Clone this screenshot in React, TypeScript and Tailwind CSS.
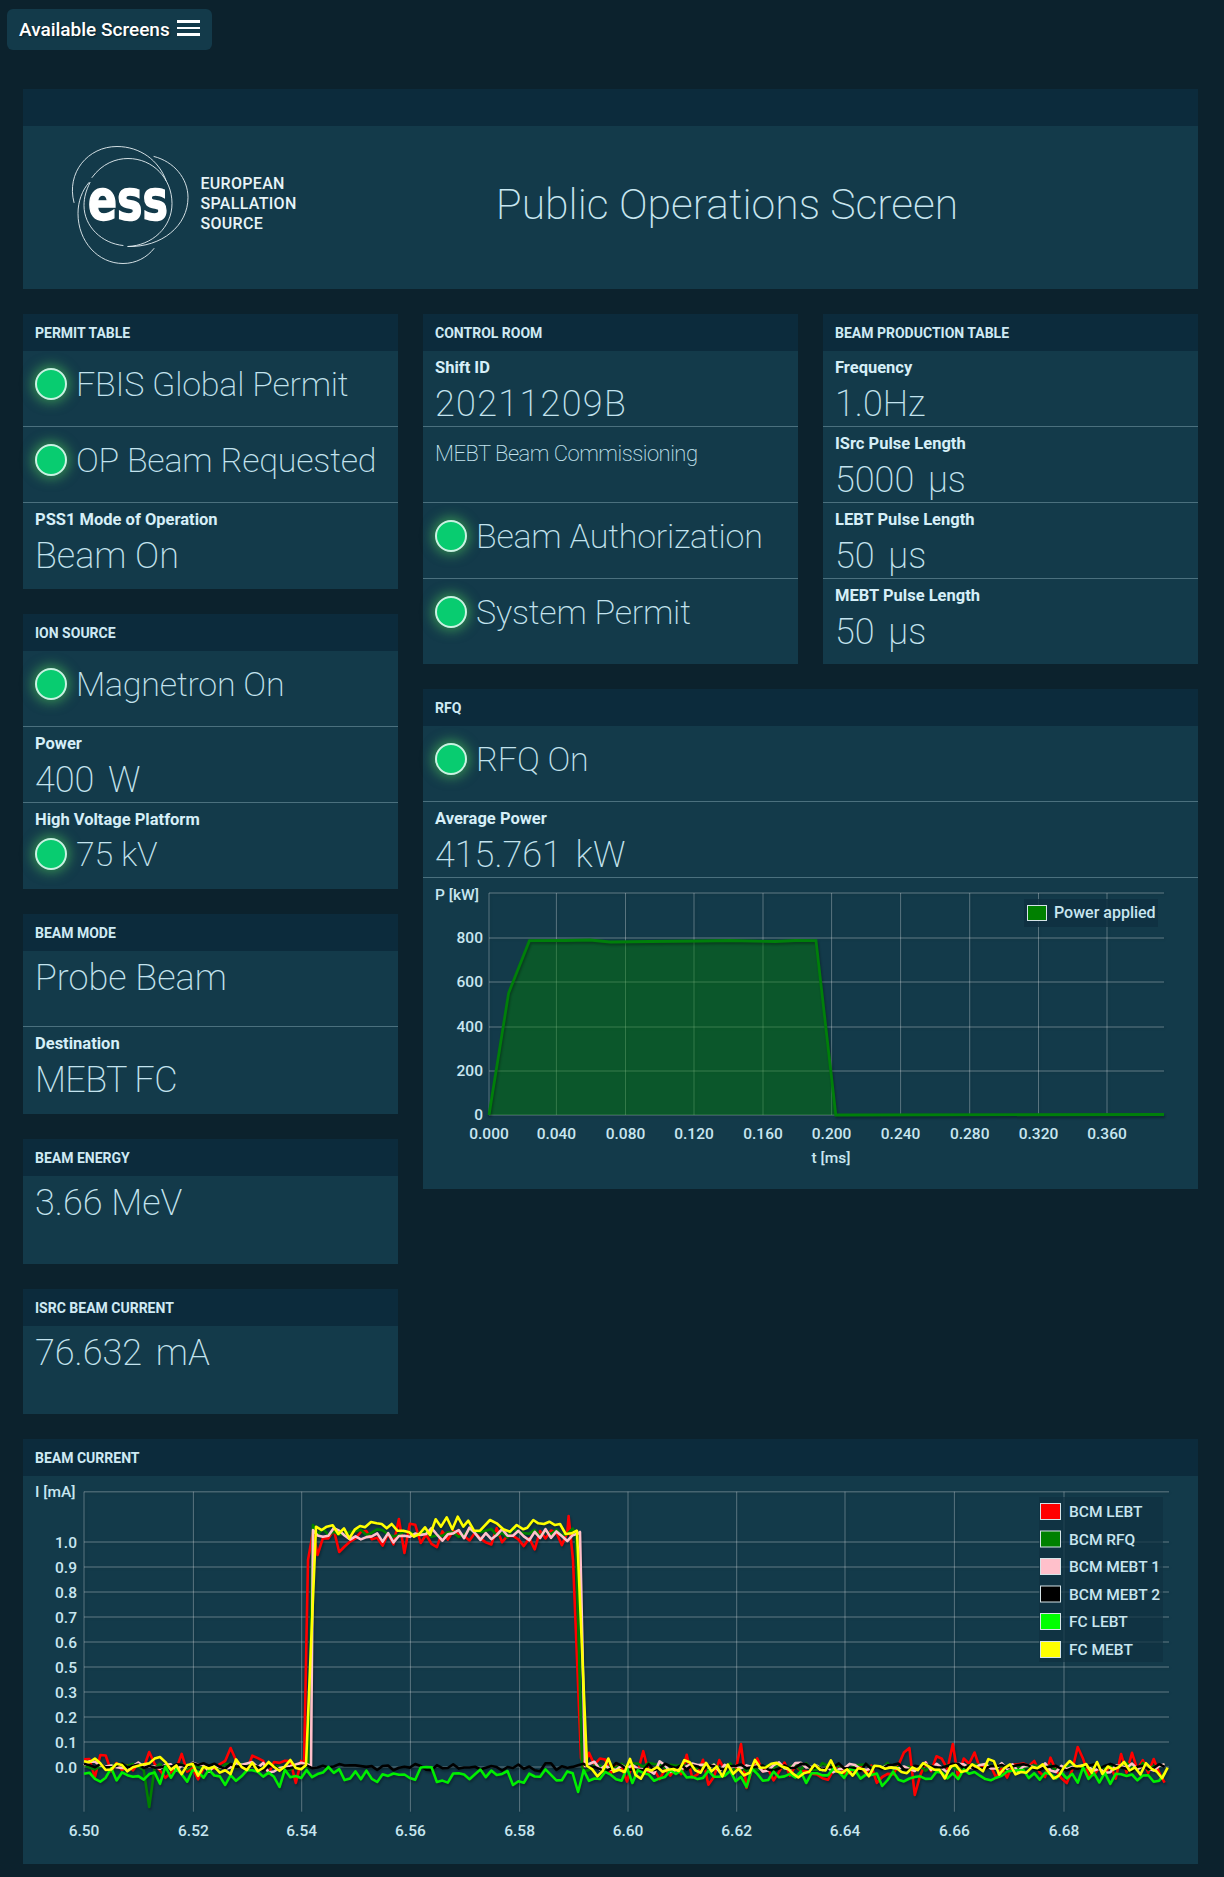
import React from "react";

const bgLine = "#ffffff";

function Led() {
  return (
    <span className="block w-[32px] h-[32px] shrink-0 rounded-full bg-[#08cc70] border-2 border-[#c9f2e2] shadow-[0_0_12px_3px_rgba(76,200,90,0.55)]" />
  );
}

function Panel({ title, children, className = "" }: { title: string; children: React.ReactNode; className?: string }) {
  return (
    <section className={"bg-[#133a4a] flex flex-col " + className}>
      <h2 className="h-[37px] shrink-0 bg-[#0c2b3c] px-3 pt-[1px] flex items-center text-[14px] font-bold text-[#cfeaf4] uppercase">
        {title}
      </h2>
      {children}
    </section>
  );
}

function LedRow({ text, last = false }: { text: string; last?: boolean }) {
  return (
    <div className={"h-[76px] shrink-0 px-3 pt-[17px] flex items-start gap-[9px] " + (last ? "" : "border-b border-[#4b707e]")}>
      <Led />
      <span className="font-[200] text-[34px] tracking-[-0.22px] leading-[32px] text-[#c3e3ee] whitespace-nowrap">{text}</span>
    </div>
  );
}

function ValueRow({ label, value, last = false, h = "h-[76px]", cls = "" }: { label: string; value: string; last?: boolean; h?: string; cls?: string }) {
  return (
    <div className={h + " shrink-0 px-3 pt-[7px] " + (last ? "" : "border-b border-[#4b707e]")}>
      <div className="text-[16.5px] leading-[20px] font-bold text-[#d6eff8]">{label}</div>
      <div className={"mt-[4px] font-[200] text-[36px] leading-[44px] text-[#c3e3ee] whitespace-nowrap " + cls}>{value}</div>
    </div>
  );
}

function BigRow({ value, h = "h-[76px]", last = false, cls = "" }: { value: string; h?: string; last?: boolean; cls?: string }) {
  return (
    <div className={h + " shrink-0 px-3 pt-[5px] " + (last ? "" : "border-b border-[#4b707e]")}>
      <div className={"font-[200] text-[36px] leading-[44px] text-[#c3e3ee] whitespace-nowrap " + cls}>{value}</div>
    </div>
  );
}

function Logo() {
  return (
    <svg viewBox="60 137.5 250 140" className="w-[250px] h-[140px]" aria-label="ESS logo">
      <g fill="none" stroke="#e8f1f4" strokeWidth="0.9" strokeLinecap="round">
        <path d="M74 202 C66 172 88 146 117 146 C140 146 159 160 166 180" />
        <path d="M92 177 C102 163 116 158 128 158 C153 158 172 178 172 203 C172 227 152 245 128 246" />
        <path d="M90 182 C86 190 84 197 84 205 C84 226 102 243 123 245" />
        <path d="M154 156 C174 161 188 178 188 197 C188 225 162 247 128 246" />
        <path d="M89 182 C82 190 78 201 78 213 C78 241 98 263 123 263 C136 263 147 257 154 248" />
      </g>
      <text x="88" y="218" fill="#ffffff" stroke="#ffffff" strokeWidth="1.6" fontFamily="'DejaVu Sans', sans-serif" fontWeight="700" fontSize="56" textLength="80" lengthAdjust="spacingAndGlyphs">ess</text>
      <g fill="#e8f4f8" fontFamily="Roboto, sans-serif" fontWeight="500" fontSize="16" letterSpacing="0.3">
        <text x="200.5" y="188">EUROPEAN</text>
        <text x="200.5" y="208">SPALLATION</text>
        <text x="200.5" y="228">SOURCE</text>
      </g>
    </svg>
  );
}

function PowerChart() {
  const xs = [489, 556.4, 625.5, 694, 763, 831.6, 900.6, 969.7, 1038.5, 1107];
  const xl = ["0.000", "0.040", "0.080", "0.120", "0.160", "0.200", "0.240", "0.280", "0.320", "0.360"];
  const ys: [number, string][] = [[938, "800"], [982, "600"], [1027, "400"], [1071, "200"], [1115, "0"]];
  const top = [[529.4, 940.7], [565, 940.5], [590, 940], [610, 942], [650, 941.5], [700, 941], [730, 940.5], [775, 941.5], [795, 940.5], [816, 940.7]];
  const outline = "M489 1115 L508.6 993 " + top.map((p) => `L${p[0]} ${p[1]}`).join(" ") + " L835.8 1115 L1164 1114.5";
  return (
    <svg viewBox="423 878 775 311" className="w-[775px] h-[311px] block">
      <g stroke={bgLine} strokeOpacity="0.22" className="drop-shadow-[1px_1px_1px_rgba(0,0,0,0.3)]">
        <line x1="489" x2="1164" y1="893" y2="893" strokeWidth="1.6" />
        {ys.map(([y]) => <line key={y} x1="489" x2="1164" y1={y} y2={y} strokeWidth="1.6" />)}
        {xs.map((x) => <line key={x} x1={x} x2={x} y1="893" y2="1115" strokeWidth="1" strokeOpacity="0.3" />)}
      </g>
      <path d={outline + " L1164 1115 Z"} fill="#008000" fillOpacity="0.42" />
      <path d={outline} fill="none" stroke="#007f0a" strokeWidth="2.8" className="drop-shadow-[1px_2px_1px_rgba(0,0,0,0.3)]" />
      <g fill="#c8e6f0" fontSize="15.5" fontWeight="500">
        {ys.map(([y, l]) => <text key={l} x="483" y={y + 5} textAnchor="end">{l}</text>)}
        {xs.map((x, i) => <text key={x} x={x} y="1139" textAnchor="middle">{xl[i]}</text>)}
        <text x="831" y="1163" textAnchor="middle">t [ms]</text>
        <text x="435" y="900">P [kW]</text>
      </g>
      <rect x="1024" y="899" width="134" height="28" fill="#0f3041" fillOpacity="0.85" />
      <rect x="1027.5" y="905.5" width="19" height="15" fill="#008000" stroke="#d5e4e8" />
      <text x="1054" y="918" fill="#c8e6f0" fontSize="16" fontWeight="500">Power applied</text>
    </svg>
  );
}

function rng(seed: number) {
  let s = seed;
  return () => {
    s = (s * 1664525 + 1013904223) % 4294967296;
    return s / 4294967296 - 0.5;
  };
}

type Spec = {
  seed: number; base: number; top: number; lowAmp: number; topAmp: number;
  rise: [number, number][]; fall: [number, number][]; spikes?: [number, number][];
};

function series(sp: Spec) {
  const r = rng(sp.seed);
  const pts: [number, number][] = [];
  const step = 5.43;
  const rStart = sp.rise.length ? sp.rise[0][0] : Infinity;
  const rEnd = sp.rise.length ? sp.rise[sp.rise.length - 1][0] : Infinity;
  const fStart = sp.fall.length ? sp.fall[0][0] : Infinity;
  const fEnd = sp.fall.length ? sp.fall[sp.fall.length - 1][0] : Infinity;
  let risen = false;
  let fallen = false;
  for (let i = 0; i < 200; i++) {
    const x = 84 + i * step;
    if (x > 1169) break;
    const n = r() + r() * 0.6;
    if (x >= rStart && !risen) { pts.push(...sp.rise); risen = true; }
    if (x >= fStart && !fallen) { pts.push(...sp.fall); fallen = true; }
    if (x >= rStart && x <= rEnd) continue;
    if (x >= fStart && x <= fEnd) continue;
    const high = x > rEnd && x < fStart;
    let y = high ? sp.top + n * sp.topAmp : sp.base + n * sp.lowAmp;
    const sk = sp.spikes?.find((k) => Math.abs(k[0] - x) < step / 2);
    if (sk) y = sk[1];
    pts.push([x, y]);
  }
  return pts.map((p) => `${p[0].toFixed(1)},${p[1].toFixed(1)}`).join(" ");
}

const yellowTop: [number, number][] = [
  [78, 140], [95, 150], [110, 140], [128, 136], [145, 162], [162, 145], [178, 175], [195, 148], [210, 138], [225, 142], [243, 126], [260, 130], [275, 132], [290, 145], [305, 132], [322, 152], [340, 152], [358, 157], [372, 170], [388, 162], [405, 142], [420, 165], [437, 118], [453, 140], [470, 112], [487, 148], [503, 110], [520, 140], [535, 122], [552, 152], [570, 152], [600, 120], [620, 130], [640, 148], [660, 155], [680, 135], [700, 148], [712, 143], [730, 120], [745, 130], [762, 132], [778, 125], [795, 135], [810, 132], [827, 162], [845, 160], [860, 152],
];

const specs: { c: string; sp: Spec }[] = [
  {
    c: "#ff0000",
    sp: {
      seed: 11, base: 1768, top: 1537, lowAmp: 22, topAmp: 18,
      rise: [[304, 1766], [308, 1560], [313, 1532]],
      fall: [[568.6, 1516], [573, 1560], [581, 1758], [584, 1766]],
      spikes: [[320, 1555], [337, 1552], [399, 1519], [407, 1553], [103, 1755], [150, 1752], [229, 1748], [738.6, 1744], [747, 1788], [908, 1748], [916.6, 1795], [951, 1744], [1077.6, 1747], [1120, 1754], [296, 1783]],
    },
  },
  {
    c: "#008000",
    sp: {
      seed: 23, base: 1767, top: 1533, lowAmp: 6, topAmp: 7,
      rise: [[308, 1766], [313, 1525]],
      fall: [[576, 1535], [582, 1766]],
      spikes: [[146.7, 1807]],
    },
  },
  {
    c: "#ffc0cb",
    sp: {
      seed: 37, base: 1767, top: 1535, lowAmp: 9, topAmp: 10,
      rise: [[311, 1766], [313, 1530]],
      fall: [[580, 1532], [585, 1766]],
    },
  },
  { c: "#000000", sp: { seed: 53, base: 1767, top: 1767, lowAmp: 6, topAmp: 6, rise: [], fall: [] } },
  {
    c: "#00f000",
    sp: {
      seed: 71, base: 1775, top: 1775, lowAmp: 12, topAmp: 12, rise: [], fall: [],
      spikes: [[279, 1787], [223, 1785], [327, 1767], [376, 1782], [425, 1767], [435, 1782], [511, 1785], [576.5, 1792], [630, 1783], [746, 1787], [805, 1783], [880, 1786]],
    },
  },
];

function yellowLine() {
  const r = rng(97);
  const pts: string[] = [];
  for (let x = 84; x < 306; x += 5.43) pts.push(`${x.toFixed(1)},${(1768 + (r() + r() * 0.6) * 14).toFixed(1)}`);
  pts.push("306,1765");
  yellowTop.forEach(([a, b]) => pts.push(`${(290 + a / 3).toFixed(1)},${(1480 + b / 3).toFixed(1)}`));
  pts.push("577,1531", "587,1766");
  for (let x = 592; x < 1169; x += 5.43) pts.push(`${x.toFixed(1)},${(1768 + (r() + r() * 0.6) * 14).toFixed(1)}`);
  return pts.join(" ");
}

function CurrentChart() {
  const xs = [84, 193.4, 301.7, 410.4, 519.6, 628, 736.7, 845, 954.4, 1064];
  const xl = ["6.50", "6.52", "6.54", "6.56", "6.58", "6.60", "6.62", "6.64", "6.66", "6.68"];
  const ys: [number, string][] = [[1542, "1.0"], [1567, "0.9"], [1592, "0.8"], [1617, "0.7"], [1642, "0.6"], [1667, "0.5"], [1692, "0.3"], [1717, "0.2"], [1742, "0.1"], [1767, "0.0"]];
  const legend: [string, string, number][] = [["#ff0000", "BCM LEBT", 1503], ["#008000", "BCM RFQ", 1530.5], ["#ffc0cb", "BCM MEBT 1", 1558], ["#000000", "BCM MEBT 2", 1585.5], ["#00ff00", "FC LEBT", 1613], ["#ffff00", "FC MEBT", 1641]];
  return (
    <svg viewBox="23 1476 1175 388" className="w-[1175px] h-[388px] block">
      <g stroke={bgLine} strokeOpacity="0.22" className="drop-shadow-[1px_1px_1px_rgba(0,0,0,0.3)]">
        <line x1="84" x2="1169" y1="1491.7" y2="1491.7" strokeWidth="1.6" />
        {ys.map(([y]) => <line key={y} x1="84" x2="1169" y1={y} y2={y} strokeWidth="1.6" />)}
        {xs.map((x) => <line key={x} x1={x} x2={x} y1="1491.7" y2="1811.7" strokeWidth="1" strokeOpacity="0.3" />)}
      </g>
      <g fill="none" strokeWidth="2.6" strokeLinejoin="round" className="drop-shadow-[1px_2px_1px_rgba(0,0,0,0.3)]">
        {specs.map((s) => <polyline key={s.c} points={series(s.sp)} stroke={s.c} />)}
        <polyline points={yellowLine()} stroke="#ffff00" />
      </g>
      <g fill="#c8e6f0" fontSize="15.5" fontWeight="500">
        {ys.map(([y, l]) => <text key={l} x="77" y={y + 5.5} textAnchor="end">{l}</text>)}
        {xs.map((x, i) => <text key={x} x={x} y="1835.5" textAnchor="middle">{xl[i]}</text>)}
        <text x="35" y="1497">I [mA]</text>
      </g>
      <rect x="1039" y="1497" width="124" height="165" fill="#0f3041" fillOpacity="0.72" />
      {legend.map(([c, t, y]) => (
        <g key={t}>
          <rect x="1040.5" y={y + 0.5} width="20" height="16" fill={c} stroke="#d5e4e8" />
          <text x="1069" y={y + 14} fill="#c8e6f0" fontSize="15.5" fontWeight="500">{t}</text>
        </g>
      ))}
    </svg>
  );
}

export default function App() {
  return (
    <div className="w-[1224px] h-[1877px] bg-[#0c222d] font-['Roboto',sans-serif] overflow-hidden">
      <div className="pt-[9px] pl-[7px]">
        <button className="w-[205px] h-[41px] rounded-md bg-[#133a4a] flex items-center pl-[12px] pt-[1px] gap-[7px] text-white text-[19px] font-medium whitespace-nowrap [text-shadow:1px_1px_2px_rgba(0,0,0,0.5)]">
          Available Screens
          <span className="flex flex-col gap-[4px] w-[23px] -mt-[4px]">
            <span className="h-[2.5px] bg-white" />
            <span className="h-[2.5px] bg-white" />
            <span className="h-[2.5px] bg-white" />
          </span>
        </button>
      </div>

      <main className="ml-[23px] w-[1175px] mt-[39px] flex flex-col gap-[25px]">
        <section className="flex flex-col">
          <div className="h-[37px] bg-[#0c2b3c]" />
          <div className="h-[163px] bg-[#133a4a] flex items-center">
            <div className="w-[287px] pl-[37px]"><Logo /></div>
            <h1 className="w-[834px] -mt-[7px] text-center font-[200] text-[42.7px] text-[#c8e6f0] whitespace-nowrap">Public Operations Screen</h1>
          </div>
        </section>

        <div className="grid grid-cols-[375px_775px] gap-[25px]">
          <div className="flex flex-col gap-[25px]">
            <Panel title="Permit Table">
              <LedRow text="FBIS Global Permit" />
              <LedRow text="OP Beam Requested" />
              <ValueRow label="PSS1 Mode of Operation" value="Beam On" last h="h-[86px]" />
            </Panel>
            <Panel title="Ion Source">
              <LedRow text="Magnetron On" />
              <ValueRow label="Power" value="400 W" cls="[word-spacing:5px]" />
              <div className="h-[86px] px-3 pt-[7px]">
                <div className="text-[16.5px] leading-[20px] font-bold text-[#d6eff8]">High Voltage Platform</div>
                <div className="mt-[8px] flex items-center gap-[9px]">
                  <Led />
                  <span className="font-[200] text-[34px] tracking-[-0.22px] leading-[32px] text-[#c3e3ee]">75 kV</span>
                </div>
              </div>
            </Panel>
            <Panel title="Beam Mode">
              <BigRow value="Probe Beam" />
              <ValueRow label="Destination" value="MEBT FC" last h="h-[87px]" cls="tracking-[-0.6px]" />
            </Panel>
            <Panel title="Beam Energy">
              <BigRow value="3.66 MeV" h="h-[88px]" last />
            </Panel>
            <Panel title="ISrc Beam Current">
              <BigRow value="76.632 mA" h="h-[88px]" last cls="[word-spacing:5px]" />
            </Panel>
          </div>

          <div className="flex flex-col gap-[25px]">
            <div className="grid grid-cols-2 gap-[25px]">
              <Panel title="Control Room" className="h-[350px]">
                <ValueRow label="Shift ID" value="20211209B" cls="tracking-[1.3px]" />
                <div className="h-[76px] px-3 pt-[11px] border-b border-[#4b707e] font-[200] text-[22px] tracking-[-0.5px] leading-[32px] text-[#c3e3ee]">MEBT Beam Commissioning</div>
                <LedRow text="Beam Authorization" />
                <LedRow text="System Permit" last />
              </Panel>
              <Panel title="Beam Production Table" className="h-[350px]">
                <ValueRow label="Frequency" value="1.0Hz" />
                <ValueRow label="ISrc Pulse Length" value="5000 µs" cls="[word-spacing:5px]" />
                <ValueRow label="LEBT Pulse Length" value="50 µs" cls="[word-spacing:5px]" />
                <ValueRow label="MEBT Pulse Length" value="50 µs" last cls="[word-spacing:5px]" />
              </Panel>
            </div>
            <Panel title="RFQ">
              <LedRow text="RFQ On" />
              <ValueRow label="Average Power" value="415.761 kW" cls="[word-spacing:5px]" />
              <PowerChart />
            </Panel>
          </div>
        </div>

        <Panel title="Beam Current">
          <CurrentChart />
        </Panel>
      </main>
    </div>
  );
}
